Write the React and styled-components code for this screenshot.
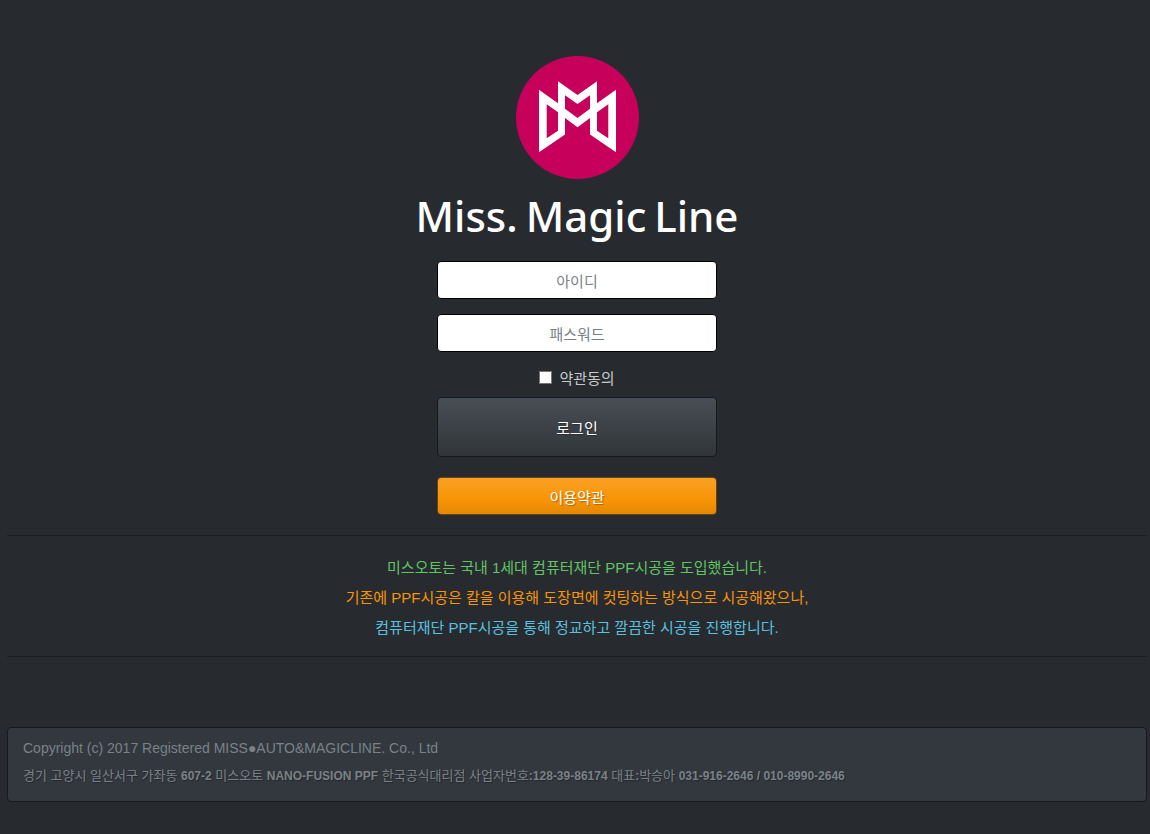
import { useState } from 'react';
import styled, { createGlobalStyle } from 'styled-components';

const notices = [
  { color: '#62c462', text: '미스오토는 국내 1세대 컴퓨터재단 PPF시공을 도입했습니다.' },
  { color: '#f89406', text: '기존에 PPF시공은 칼을 이용해 도장면에 컷팅하는 방식으로 시공해왔으나,' },
  { color: '#5bc0de', text: '컴퓨터재단 PPF시공을 통해 정교하고 깔끔한 시공을 진행합니다.' },
];

const Emblem = () => (
  <svg width="123" height="123" viewBox="0 0 123 123" aria-hidden="true">
    <circle cx="61.5" cy="61.5" r="61.5" fill="#c7005c" />
    <path
      fill="#fff"
      fillRule="evenodd"
      d="M23 33.7 42 47.3V25.3L61.5 39 81 25.3V47.3L100 33.7V96.3L74 78.5V62L61.5 71.3 49 62V78.5L23 96.3Z
         M30.7 48.3V82.3L42 74.7V56.3Z
         M92.3 48.3V82.3L81 74.7V56.3Z
         M49 39.3 61.5 48 74 39.3V52.7L61.5 62 49 52.7Z"
    />
  </svg>
);

const App = () => {
  const [agreed, setAgreed] = useState(false);

  return (
    <>
      <GlobalStyle />
      <Page>
        <Brand>
          <Emblem />
          <Wordmark>
            <span>Miss.</span>
            <span>Magic</span>
            <span>Line</span>
          </Wordmark>
        </Brand>

        <LoginForm onSubmit={(e) => e.preventDefault()}>
          <Field type="text" placeholder="아이디" aria-label="아이디" />
          <Field type="password" placeholder="패스워드" aria-label="패스워드" />
          <Agree>
            <input
              type="checkbox"
              checked={agreed}
              onChange={(e) => setAgreed(e.target.checked)}
            />
            <span>약관동의</span>
          </Agree>
          <Button type="submit" $large>
            로그인
          </Button>
          <Button type="button" $warning>
            이용약관
          </Button>
        </LoginForm>

        <Notices>
          {notices.map((notice) => (
            <Notice key={notice.color} $color={notice.color}>
              {notice.text}
            </Notice>
          ))}
        </Notices>

        <Footer>
          <Copyright>
            Copyright (c) 2017 Registered MISS●AUTO&amp;MAGICLINE. Co., Ltd
          </Copyright>
          <Address>
            경기 고양시 일산서구 가좌동 <b>607-2</b> 미스오토 <b>NANO-FUSION PPF</b>{' '}
            한국공식대리점 사업자번호<b>:128-39-86174</b> 대표<b>:</b>박승아{' '}
            <b>031-916-2646 / 010-8990-2646</b>
          </Address>
        </Footer>
      </Page>
    </>
  );
};

const GlobalStyle = createGlobalStyle`
  *, *::before, *::after {
    box-sizing: border-box;
  }

  body {
    margin: 0;
    background: #272b30;
    color: #c8c8c8;
    font-family: "Liberation Sans", "Noto Sans CJK KR", sans-serif;
    font-size: 15px;
    line-height: 20px;
  }
`;

const Page = styled.main`
  padding: 56px 3px 32px 7px;
`;

const Brand = styled.header`
  display: flex;
  flex-direction: column;
  align-items: center;
`;

const Wordmark = styled.h1`
  display: flex;
  gap: 8px;
  margin: 7px 0 15px;
  color: #fff;
  font-family: "Noto Sans", sans-serif;
  font-size: 42px;
  font-weight: 500;
  line-height: 60px;
`;

const LoginForm = styled.form`
  display: flex;
  flex-direction: column;
  width: 280px;
  max-width: 100%;
  margin: 0 auto 20px;
`;

const Field = styled.input`
  height: 38px;
  margin: 0 0 15px;
  padding: 10px 12px 8px;
  border: 1px solid #000;
  border-radius: 4px;
  background: #fff;
  color: #272b30;
  font: inherit;
  text-align: center;

  &::placeholder {
    color: #7a8288;
    opacity: 1;
  }
`;

const Agree = styled.label`
  display: flex;
  align-items: center;
  justify-content: center;
  gap: 7px;
  height: 20px;
  margin: 0 0 10px;

  input {
    width: 13px;
    height: 13px;
    margin: 0;
    border: 1px solid #767676;
    background: #fff;
    appearance: none;
  }

  input:checked {
    background: #f89406;
  }

  span {
    padding-top: 4px;
  }
`;

const Button = styled.button`
  height: ${(p) => (p.$large ? '60px' : '38px')};
  margin: 0 0 ${(p) => (p.$large ? '20px' : '0')};
  padding: 4px 12px 0;
  border: 1px solid ${(p) => (p.$warning ? '#6b4510' : '#17191c')};
  border-radius: 4px;
  background: ${(p) =>
    p.$warning
      ? 'linear-gradient(#faa123, #f89406 60%, #e48806)'
      : 'linear-gradient(#484e55, #3a3f44 60%, #313539)'};
  color: #fff;
  font: inherit;
  text-shadow: 1px 1px 1px rgba(0, 0, 0, 0.3);
  cursor: pointer;
`;

const Notices = styled.section`
  padding: 17px 0 13px;
  border-top: 1px solid #1c1e22;
  border-bottom: 1px solid #1c1e22;
`;

const Notice = styled.p`
  margin: 0;
  color: ${(p) => p.$color};
  line-height: 30px;
  text-align: center;
`;

const Footer = styled.footer`
  margin-top: 70px;
  padding: 10px 15px 15px;
  border: 1px solid #17191c;
  border-radius: 4px;
  background: #32383e;
  color: #7a8288;
`;

const Copyright = styled.p`
  margin: 0 0 8px;
  font-size: 14px;
`;

const Address = styled.p`
  margin: 0;
  font-size: 13px;
  text-shadow: 1px 1px 1px rgba(0, 0, 0, 0.3);

  b {
    font-size: 12px;
  }
`;

export default App;
